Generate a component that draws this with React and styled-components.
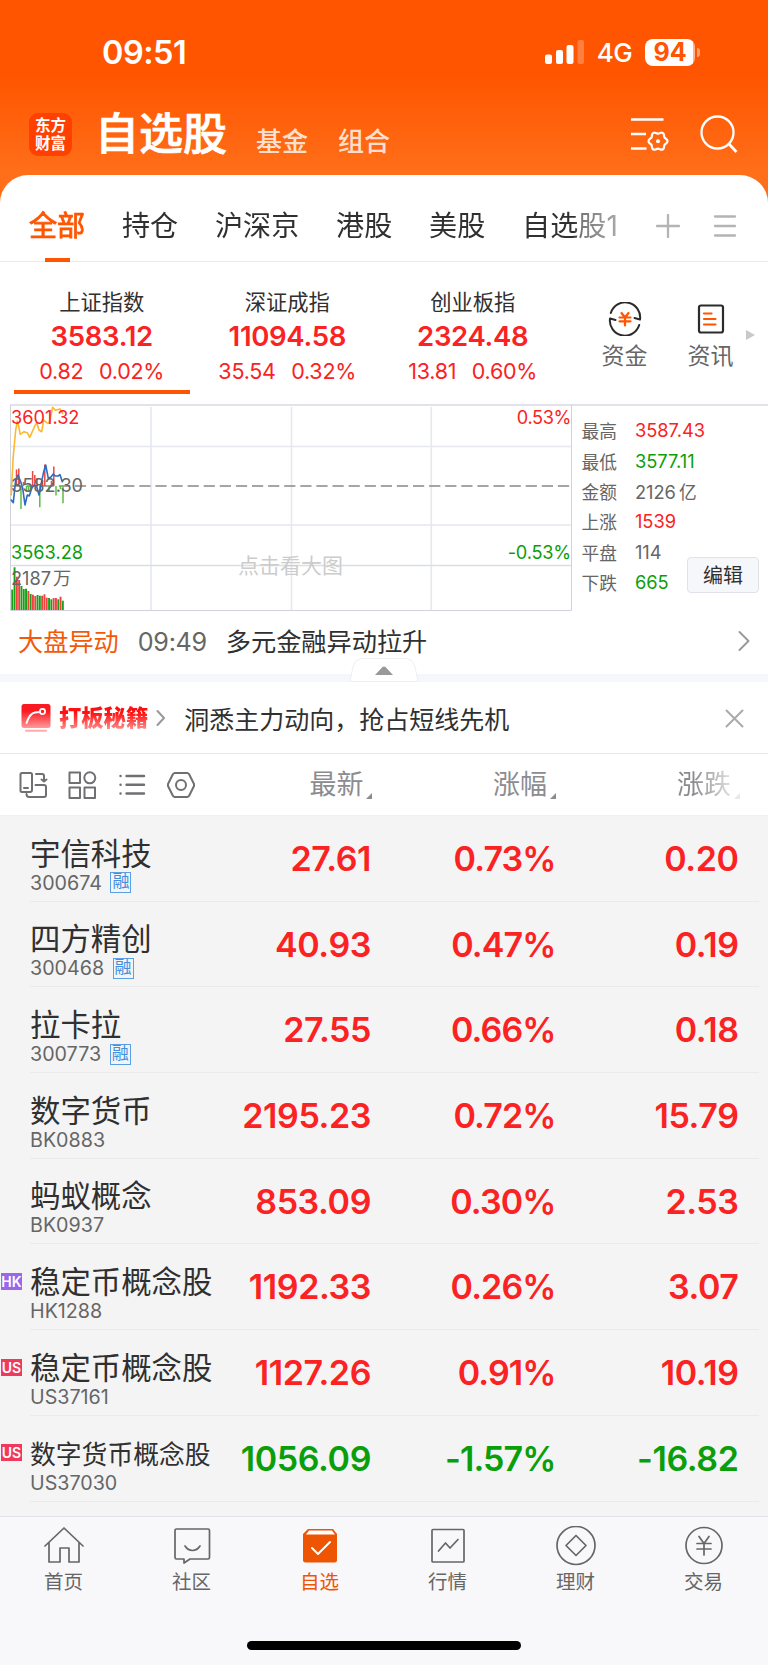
import React from "react";
import styled, { createGlobalStyle } from "styled-components";

const RED = "#fa2222";
const GREEN = "#0a9f0a";
const ORANGE = "#ff5500";

const tabs = ["全部", "持仓", "沪深京", "港股", "美股", "自选股1"];

const indices = [
  { name: "上证指数", value: "3583.12", diff: "0.82", pct: "0.02%" },
  { name: "深证成指", value: "11094.58", diff: "35.54", pct: "0.32%" },
  { name: "创业板指", value: "2324.48", diff: "13.81", pct: "0.60%" },
];

const stats = [
  { label: "最高", value: "3587.43", color: RED },
  { label: "最低", value: "3577.11", color: GREEN },
  { label: "金额", value: "2126", unit: "亿", color: "#666" },
  { label: "上涨", value: "1539", color: RED },
  { label: "平盘", value: "114", color: "#666" },
  { label: "下跌", value: "665", color: GREEN },
];

const stocks = [
  { name: "宇信科技", code: "300674", margin: true, price: "27.61", pct: "0.73%", diff: "0.20" },
  { name: "四方精创", code: "300468", margin: true, price: "40.93", pct: "0.47%", diff: "0.19" },
  { name: "拉卡拉", code: "300773", margin: true, price: "27.55", pct: "0.66%", diff: "0.18" },
  { name: "数字货币", code: "BK0883", price: "2195.23", pct: "0.72%", diff: "15.79" },
  { name: "蚂蚁概念", code: "BK0937", price: "853.09", pct: "0.30%", diff: "2.53" },
  { name: "稳定币概念股", code: "HK1288", market: "HK", price: "1192.33", pct: "0.26%", diff: "3.07" },
  { name: "稳定币概念股", code: "US37161", market: "US", price: "1127.26", pct: "0.91%", diff: "10.19" },
  { name: "数字货币概念股", code: "US37030", market: "US", price: "1056.09", pct: "-1.57%", diff: "-16.82", down: true },
];

// [color, top] of every volume bar, left to right
const volumes = [
  ["g", 189.5], ["g", 167.3], ["r", 176.7], ["r", 180], ["g", 186], ["g", 189], ["g", 188.7], ["r", 191],
  ["g", 194], ["r", 194.7], ["r", 196], ["g", 195], ["g", 195.7], ["r", 195.7], ["r", 194.3], ["r", 197.7],
  ["g", 198], ["g", 199.3], ["r", 198], ["r", 198], ["g", 199.3], ["r", 196.7], ["g", 200.7],
];

// [x, y] end of the bars growing from the middle line
const upBars = [[16.5, 69.5], [18.8, 68.5], [23.5, 82], [32.6, 71], [34.8, 75], [37, 78], [42.5, 80], [44.8, 64.5], [51.5, 81], [53.8, 66.5]];
const downBars = [[21, 109], [26.5, 91], [28.5, 92], [30.5, 90], [39.8, 107.3], [49, 92], [56, 95.5], [60.5, 89], [63, 103.3]];

const GlobalStyle = createGlobalStyle`
  * { box-sizing: border-box; }
  body {
    margin: 0;
    background: #fff;
    font-family: Inter, "Noto Sans CJK SC", sans-serif;
    color: #303030;
  }
  svg { display: block; flex: none; }
`;

const Page = styled.div`
  width: 768px;
  height: 1665px;
  display: flex;
  flex-direction: column;
  overflow: hidden;
`;

/* ——— Header ——— */
const Header = styled.header`
  height: 215px;
  flex: none;
  margin-bottom: -40px;
  background: linear-gradient(#ff5500 0, #ff5500 75px, #ff6f1a 175px, #ff6f1a 100%);
  color: #fff;
`;

const StatusBar = styled.div`
  height: 104px;
  padding: 0 68px 0 102px;
  display: flex;
  align-items: center;
`;

const Clock = styled.div`
  flex: 1;
  padding-top: 1px;
  font-size: 32.5px;
  font-weight: 600;
  letter-spacing: -0.5px;
`;

const Network = styled.div`
  margin: 1px 13px 0 12px;
  font-size: 26px;
  font-weight: 500;
  letter-spacing: -0.6px;
`;

const Battery = styled.div`
  width: 50px;
  height: 27px;
  margin-right: 2px;
  border-radius: 8px;
  background: linear-gradient(90deg, #fff 47.5px, #ffb48c 47.5px);
  color: ${ORANGE};
  font-size: 25px;
  font-weight: 700;
  line-height: 27px;
  text-align: center;
`;

const BatteryTip = styled.div`
  width: 3px;
  height: 9px;
  border-radius: 0 4px 4px 0;
  background: #ffa070;
`;

const TitleBar = styled.div`
  height: 71px;
  padding: 0 29px;
  display: flex;
`;

const Logo = styled.div`
  width: 43px;
  height: 43px;
  margin: 9px 23px 0 0;
  padding-top: 4px;
  border-radius: 9px;
  background: #ff4000;
  font-size: 15.5px;
  font-weight: 700;
  line-height: 18px;
  text-align: center;
`;

const Title = styled.h1`
  margin: 0 29px 0 0;
  font-size: 44px;
  font-weight: 500;
  line-height: 61px;
  -webkit-text-stroke: 0.7px #fff;
`;

const SubTitle = styled.div`
  width: 53px;
  margin-right: 29px;
  padding-top: 18px;
  color: #ffe0d0;
  font-size: 26px;
  font-weight: 500;
  line-height: 40px;
  white-space: nowrap;
`;

const HeaderIcons = styled.div`
  margin: 10px 0 0 auto;
  display: flex;
  gap: 30px;
`;

/* ——— Tabs ——— */
const TabBar = styled.nav`
  height: 87px;
  flex: none;
  display: flex;
  align-items: center;
  border-radius: 28px 28px 0 0;
  border-bottom: 1px solid #ececee;
  background: #fff;
`;

const TabScroller = styled.div`
  width: 640px;
  height: 87px;
  padding-left: 29px;
  display: flex;
  gap: 36.8px;
  mask-image: linear-gradient(90deg, #000 574px, rgba(0, 0, 0, 0.65) 582px, rgba(0, 0, 0, 0.4) 620px);
`;

const Tab = styled.div`
  position: relative;
  flex: none;
  color: ${({ $active }) => ($active ? ORANGE : "#303030")};
  font-size: 28.1px;
  line-height: 103px;
  -webkit-text-stroke: ${({ $active }) => ($active ? "0.8px" : "0")};

  &::after {
    content: "";
    display: ${({ $active }) => ($active ? "block" : "none")};
    position: absolute;
    left: 16px;
    bottom: 0;
    width: 25px;
    height: 4px;
    background: ${ORANGE};
  }
`;

const TabActions = styled.div`
  padding: 15px 0 0 15.5px;
  display: flex;
  gap: 33.5px;
`;

/* ——— Index strip ——— */
const IndexStrip = styled.section`
  height: 142px;
  flex: none;
  padding-left: 9px;
  display: flex;
`;

const IndexCard = styled.div`
  width: 185.5px;
  height: 133px;
  padding-top: 24px;
  display: flex;
  flex-direction: column;
  align-items: center;

  &::after {
    content: "";
    width: 176px;
    height: 4px;
    margin-top: 3px;
    background: ${({ $active }) => ($active ? ORANGE : "transparent")};
  }
`;

const IndexName = styled.div`
  font-size: 21.3px;
  line-height: 32px;
`;

const IndexValue = styled.div`
  color: ${RED};
  font-size: 27.5px;
  font-weight: 600;
  line-height: 37px;
  letter-spacing: -0.3px;
`;

const IndexChange = styled.div`
  height: 32px;
  display: flex;
  gap: 15.5px;
  color: ${RED};
  font-size: 21.5px;
  line-height: 32px;
  letter-spacing: -0.25px;
`;

const Shortcut = styled.div`
  width: 86px;
  padding-top: 40px;
  display: flex;
  flex-direction: column;
  align-items: center;
  color: #666;
  font-size: 23px;
  line-height: 41px;

  &:nth-child(4) {
    margin-left: 16px;
  }
`;

const MoreArrow = styled.div`
  width: 0;
  height: 0;
  margin: 68px 0 0 -8px;
  border: solid transparent;
  border-width: 5.5px 0 5.5px 9px;
  border-left-color: #c9c9c9;
`;

/* ——— Chart ——— */
const ChartPanel = styled.section`
  height: 207px;
  flex: none;
  padding-left: 10px;
  display: flex;
`;

const StatList = styled.div`
  flex: 1;
  padding: 9px 9px 0 9.5px;
  border-top: 2px solid #e2e2ea;
  position: relative;
`;

const Stat = styled.div`
  height: 30.4px;
  display: flex;
  align-items: center;
  color: #666;
  font-size: 17.7px;
`;

const StatValue = styled.span`
  margin-left: 18px;
  color: ${({ $color }) => $color};
  font-size: 18.3px;
`;

const StatUnit = styled.span`
  margin-left: 3px;
  font-size: 17.7px;
`;

const EditButton = styled.button`
  position: absolute;
  right: 9px;
  top: 151px;
  width: 72px;
  height: 36px;
  padding: 0;
  border: 1px solid #dfe2ea;
  border-radius: 4px;
  background: #f6f7fb;
  color: #303030;
  font: 400 20px/36px Inter, "Noto Sans CJK SC", sans-serif;
`;

/* ——— News ——— */
const NewsRow = styled.section`
  position: relative;
  height: 71px;
  flex: none;
  padding: 0 18px 5px;
  display: flex;
  align-items: center;
  border-bottom: 8px solid #f6f7fa;
  font-size: 25.2px;
`;

const NewsTag = styled.span`
  color: #f25a0a;
`;

const NewsTime = styled.span`
  width: 68px;
  margin: 0 20px 0 19px;
  padding-top: 3px;
  color: #666;
  letter-spacing: -0.3px;
`;

const Handle = styled.div`
  position: absolute;
  left: 349px;
  top: 47px;
`;

const PushRight = styled.div`
  margin-left: auto;
`;

/* ——— Promo ——— */
const PromoRow = styled.section`
  height: 72px;
  flex: none;
  padding: 1px 24px 0 21px;
  display: flex;
  align-items: center;
  border-bottom: 1px solid #e8e8ea;
  font-size: 25px;
`;

const PromoTitle = styled.span`
  margin: 0 8px 0 8px;
  background: linear-gradient(#ff1010 35%, #ff9090 85%);
  background-clip: text;
  color: transparent;
  font-size: 22.3px;
  font-weight: 900;
  line-height: 34px;
`;

const PromoText = styled.span`
  margin: -1px 0 0 18px;
`;

/* ——— Stock table ——— */
const TableHead = styled.div`
  height: 62px;
  flex: none;
  padding-left: 18.5px;
  display: flex;
  align-items: center;
  border-bottom: 1px solid #f0f0f2;
`;

const ToolIcons = styled.div`
  width: 178px;
  padding-top: 1px;
  display: flex;
  gap: 20.5px;
`;

const Column = styled.div`
  width: ${({ $width }) => $width}px;
  padding-top: 1px;
  display: flex;
  justify-content: flex-end;
  color: #8c8c90;
  font-size: 27px;
  line-height: 62px;
  ${({ $faded }) => $faded && "mask-image: linear-gradient(90deg, #000 75%, rgba(0, 0, 0, 0.2) 97%);"}

  &::after {
    content: "";
    align-self: flex-end;
    margin: 0 0 17.5px 2.5px;
    border: 3.5px solid transparent;
    border-right-color: #8c8c90;
    border-bottom-color: #8c8c90;
  }
`;

const Table = styled.div`
  flex: 1;
  background: #f4f4f5;
`;

const Row = styled.div`
  position: relative;
  height: 85.7px;
  margin: 0 9px 0 30px;
  padding-right: 20px;
  display: flex;
  border-bottom: 1px solid #eaeaeb;
`;

const NameCell = styled.div`
  width: 190px;
  padding-top: 17.7px;
`;

const StockName = styled.div`
  font-size: ${({ $small }) => ($small ? 25.8 : 30.4)}px;
  line-height: ${({ $small }) => ($small ? 41 : 40)}px;
  height: 40px;
  white-space: nowrap;
`;

const StockCode = styled.div`
  height: 18px;
  display: flex;
  align-items: center;
  gap: 8.5px;
  color: #666;
  font-size: 19.7px;
`;

const MarginBadge = styled.span`
  width: 21px;
  height: 21px;
  border: 1.5px solid #5b9fe8;
  color: #3f8fe0;
  font-size: 17px;
  line-height: 17px;
  text-align: center;
`;

const MarketBadge = styled.span`
  position: absolute;
  left: -29px;
  top: 28.5px;
  width: 21px;
  height: 17px;
  background: ${({ $market }) => ($market === "HK" ? "#9d66ea" : "#f03a5c")};
  color: #fff;
  font-size: 14px;
  font-weight: 600;
  line-height: 17px;
  text-align: center;
`;

const Num = styled.div`
  width: ${({ $width }) => $width}px;
  color: ${({ $down }) => ($down ? GREEN : RED)};
  font-size: 34px;
  font-weight: 600;
  line-height: 86px;
  letter-spacing: ${({ $tight }) => ($tight ? -0.9 : -0.4)}px;
  text-align: right;
`;

/* ——— Bottom bar ——— */
const BottomBar = styled.footer`
  height: 149px;
  flex: none;
  border-top: 1px solid #e2e3ea;
  background: #f8f8fb;
`;

const BottomTabs = styled.div`
  height: 124px;
  display: grid;
  grid-template-columns: repeat(6, 1fr);
`;

const BottomTab = styled.div`
  padding-top: 9px;
  display: flex;
  flex-direction: column;
  align-items: center;
  color: ${({ $active }) => ($active ? "#ee5502" : "#666")};
  font-size: 19.5px;
  line-height: 33px;

  span {
    margin-left: -1px;
  }
`;

const HomeIndicator = styled.div`
  width: 274px;
  height: 9px;
  margin: 0 auto;
  border-radius: 5px;
  background: #000;
`;

const stroke = (width, color = "currentColor") => ({
  fill: "none",
  stroke: color,
  strokeWidth: width,
  strokeLinecap: "round",
  strokeLinejoin: "round",
});

// six-lobed cog around (cx, cy)
const cogPoints = (cx, cy, r, depth) =>
  Array.from({ length: 72 }, (_, i) => {
    const a = (i * Math.PI) / 36;
    const d = r + depth * Math.cos(6 * a);
    return `${(cx + d * Math.cos(a)).toFixed(2)},${(cy + d * Math.sin(a)).toFixed(2)}`;
  }).join(" ");

const bottomTabs = [
  {
    label: "首页",
    icon: <path d="M1 20 20 2l19 18M5 17v19h11V22h9v14h10V17" />,
  },
  {
    label: "社区",
    icon: <path d="M4.500 3H36a1.500 1.500 0 0 1 1.500 1.500v27A1.500 1.500 0 0 1 36 33H18l-6 4v-4H4.500A1.500 1.500 0 0 1 3 31.500v-27A1.500 1.500 0 0 1 4.500 3zM13 20c4 6 11 6 15 0" />,
  },
  {
    label: "自选",
    active: true,
    icon: (
      <>
        <path d="M8 3h25l4 5v26a2.500 2.500 0 0 1-2.500 2.500h-29A2.500 2.500 0 0 1 3 34V8z" fill="currentColor" stroke="none" />
        <path d="M9 4.500h23l3 4H6z" fill="#fff" stroke="none" />
        <path d="m12 22 6 6 12-12" stroke="#fff" strokeWidth="2" />
      </>
    ),
  },
  {
    label: "行情",
    icon: <path d="M5 3.500h30a1 1 0 0 1 1 1V35a1 1 0 0 1-1 1H5a1 1 0 0 1-1-1V4.500a1 1 0 0 1 1-1zM10.500 25l7-8 4.500 5 8-8.500" />,
  },
  {
    label: "理财",
    icon: (
      <>
        <circle cx="20" cy="19.500" r="19" />
        <path d="m20 9.500 10 10-10 10-10-10z" />
      </>
    ),
  },
  {
    label: "交易",
    icon: (
      <>
        <circle cx="20" cy="19.500" r="18" />
        <path d="m15 10.500 5 7 5-7M20 17.500V29M13 17.500h14M13 23h14" />
      </>
    ),
  },
];

const MinuteChart = () => (
  <svg width="562" height="207" viewBox="10 4 562 207" fontFamily='Inter, "Noto Sans CJK SC", sans-serif'>
    <g stroke="#e6e8f0" fill="none">
      <path d="M151 7v204M291.500 7v204M431.300 7v204" strokeWidth="1.600" />
      <path d="M10 46.500h562M10 125h562" strokeWidth="1.300" />
      <path d="M10 165.500h562" strokeWidth="1.300" stroke="#dcdee6" />
      <path d="M10 5h562" strokeWidth="2" stroke="#e2e2ea" />
      <path d="M10.500 5v205.500h561V5" strokeWidth="1" stroke="#d0d3dc" />
    </g>
    <text x="238" y="173" fontSize="21" fill="#ccc">点击看大图</text>
    <path d="M10.500 86h560" stroke="#888" strokeWidth="1.600" strokeDasharray="11.200 4.900" />
    {upBars.map(([x, y]) => (
      <path key={x} d={`M${x} 86V${y}`} stroke="#ee4545" strokeWidth="1.500" />
    ))}
    {downBars.map(([x, y]) => (
      <path key={x} d={`M${x} 86V${y}`} stroke="#5dbb45" strokeWidth="1.500" />
    ))}
    {volumes.map(([c, top], i) => (
      <rect key={i} x={11.3 + i * 2.3} y={top} width="1.900" height={210 - top} fill={c === "r" ? "#f04040" : "#18a018"} />
    ))}
    <path
      d="M11.200 95 13.200 57l2.500-27 1.700-9 1.600 7 1.300 6.300 3.700-2.600 3.300 1 2.400 4.700 2.600-5.700 2.400-5.600 2-3.400 2.300 7.300 2.700 1.700 2-11.700 3 2.700 2.300.6L52.700 7.300l2.600 3 4.700-1.300 2.700 4.500"
      {...stroke(1.6, "#fcb830")}
    />
    <path
      d="M11.200 100l2.100 2.700L15.700 80l2.300-5 2.700 6.700 2 6.600L25 105l2.300-10 2 1 2.400-7.700 2.600-3.300 2.400 1.700L39 95l2.300-11.700 2.400-11.600 2-6.700 2.600 13.300 2.400-1 2.600-3.300 2 2h2.700l2-1.300 2.300 7"
      {...stroke(1.6, "#2a6cc4")}
    />
    <g fontSize="18.200">
      <text x="11" y="23.500" fill={RED}>3601.32</text>
      <text x="11" y="91.500" fill="#666">3582.30</text>
      <text x="11" y="159" fill={GREEN}>3563.28</text>
      <text x="11" y="185" fill="#666">2187<tspan dx="2">万</tspan></text>
      <text x="571" y="23.500" fill={RED} textAnchor="end" letterSpacing="-0.400">0.53%</text>
      <text x="571" y="159" fill={GREEN} textAnchor="end" letterSpacing="-0.200">-0.53%</text>
    </g>
  </svg>
);

const App = () => (
  <Page>
    <GlobalStyle />
    <Header>
      <StatusBar>
        <Clock>09:51</Clock>
        <svg width="40" height="26" viewBox="0 0 40 26" fill="#fff">
          <rect x="0" y="15.500" width="7" height="9.500" rx="2" />
          <rect x="11" y="11" width="7" height="14" rx="2" />
          <rect x="21.500" y="6" width="7" height="19" rx="2" />
          <rect x="32.500" y="1" width="6.500" height="24" rx="2" opacity="0.250" />
        </svg>
        <Network>4G</Network>
        <Battery>94</Battery>
        <BatteryTip />
      </StatusBar>
      <TitleBar>
        <Logo>东方<br />财富</Logo>
        <Title>自选股</Title>
        <SubTitle>基金</SubTitle>
        <SubTitle>组合</SubTitle>
        <HeaderIcons>
          <svg width="38" height="40" viewBox="0 0 38 40">
            <path d="M0 5.500h32.500M0 20h15M0 34.500h15.500" stroke="#fff" strokeWidth="2.400" />
            <polygon points={cogPoints(27, 27.2, 8.5, 1)} {...stroke(2.2, "#fff")} />
            <circle cx="27" cy="27.200" r="2" fill="#fff" />
          </svg>
          <svg width="40" height="40" viewBox="0 0 40 40">
            <circle cx="18.500" cy="18.500" r="16" {...stroke(2.3, "#fff")} />
            <path d="m30 30 7.500 8" stroke="#fff" strokeWidth="2.800" />
          </svg>
        </HeaderIcons>
      </TitleBar>
    </Header>

    <TabBar>
      <TabScroller>
        {tabs.map((tab, i) => (
          <Tab key={tab} $active={i === 0}>{tab}</Tab>
        ))}
      </TabScroller>
      <TabActions>
        <svg width="24" height="24" viewBox="0 0 24 24">
          <path d="M1 12h22M12 1v22" {...stroke(2.3, "#b4b4b4")} />
        </svg>
        <svg width="24" height="24" viewBox="0 0 24 24">
          <path d="M2 2.500h20M2 12h20M2 21.500h20" {...stroke(2.3, "#b4b4b4")} />
        </svg>
      </TabActions>
    </TabBar>

    <IndexStrip>
      {indices.map((item, i) => (
        <IndexCard key={item.name} $active={i === 0}>
          <IndexName>{item.name}</IndexName>
          <IndexValue>{item.value}</IndexValue>
          <IndexChange>
            <span>{item.diff}</span>
            <span>{item.pct}</span>
          </IndexChange>
        </IndexCard>
      ))}
      <Shortcut>
        <svg width="34" height="34" viewBox="0 0 34 34">
          <path d="M2.800 11A15 15 0 0 1 32 17.500L26.500 16M31.200 23A15 15 0 0 1 2 16.500L7.500 18" {...stroke(2, "#2b2b2b")} />
          <path d="m13.500 11 3.500 4.500 3.500-4.500M17 15v8.500M11.500 15.500h11M11.500 19.300h11" {...stroke(2.2, ORANGE)} />
        </svg>
        资金
      </Shortcut>
      <Shortcut>
        <svg width="34" height="34" viewBox="0 0 34 34">
          <rect x="5" y="3.500" width="24" height="27" rx="2" {...stroke(2.2, "#2b2b2b")} />
          <path d="M10 11.500h7.500M10 17h11.500M10 22.500h11.500" {...stroke(2.2, ORANGE)} />
        </svg>
        资讯
      </Shortcut>
      <MoreArrow />
    </IndexStrip>

    <ChartPanel>
      <MinuteChart />
      <StatList>
        {stats.map((s) => (
          <Stat key={s.label}>
            {s.label}
            <StatValue $color={s.color}>
              {s.value}
              {s.unit && <StatUnit>{s.unit}</StatUnit>}
            </StatValue>
          </Stat>
        ))}
        <EditButton>编辑</EditButton>
      </StatList>
    </ChartPanel>

    <NewsRow>
      <NewsTag>大盘异动</NewsTag>
      <NewsTime>09:49</NewsTime>
      <span>多元金融异动拉升</span>
      <PushRight>
        <svg width="12" height="24" viewBox="0 0 12 24">
          <path d="m1.500 4 9 9-9 9" {...stroke(1.9, "#999")} />
        </svg>
      </PushRight>
      <Handle>
        <svg width="70" height="24" viewBox="0 0 70 24">
          <path d="M1 23.500 4 9Q6 .5 14 .5h42q8 0 10 8.500l3 14.500z" fill="#fff" stroke="#eeeff2" />
          <path d="M26 17h18l-7.500-8q-1.500-1.200-3 0z" fill="#999" />
        </svg>
      </Handle>
    </NewsRow>

    <PromoRow>
      <svg width="30" height="28" viewBox="0 0 30 28">
        <defs>
          <linearGradient id="promo" x1="0" y1="0" x2="0" y2="1">
            <stop offset="0.300" stopColor="#fb1a22" />
            <stop offset="1" stopColor="#ff9a9a" />
          </linearGradient>
        </defs>
        <rect width="29" height="24" x="0.500" rx="2.500" fill="url(#promo)" />
        <path d="M5.500 19Q9 9 14 8.500l5-.5" {...stroke(2, "#fff")} />
        <circle cx="21.500" cy="7.500" r="2.600" {...stroke(1.7, "#fff")} />
        <path d="M5 26.700h20" {...stroke(2, "#ffaaaa")} />
      </svg>
      <PromoTitle>打板秘籍</PromoTitle>
      <svg width="10" height="18" viewBox="0 0 10 18">
        <path d="m1.500 2 6.500 7-6.500 7" {...stroke(2, "#999")} />
      </svg>
      <PromoText>洞悉主力动向，抢占短线先机</PromoText>
      <PushRight>
        <svg width="19" height="19" viewBox="0 0 19 19">
          <path d="m1.500 1.500 16 16M17.500 1.500l-16 16" {...stroke(2, "#aaa")} />
        </svg>
      </PushRight>
    </PromoRow>

    <TableHead>
      <ToolIcons>
        <svg width="29" height="28" viewBox="0 0 29 28" {...stroke(2, "#707073")}>
          <path d="M9 21H3a1.500 1.500 0 0 1-1.500-1.500V3.500A1.500 1.500 0 0 1 3 2h8.500A1.500 1.500 0 0 1 13 3.500V19a2 2 0 0 1-2 2zM5 17h4" />
          <path d="M17 3h6a2 2 0 0 1 2 2v5M22.500 8.500l2.500 2 2.500-2M16.500 14H25a2 2 0 0 1 2 2v8a2 2 0 0 1-2 2H10q-2.500 0-2.500-3" />
        </svg>
        <svg width="29" height="28" viewBox="0 0 29 28" {...stroke(2, "#707073")}>
          <path d="M1.500 1.500h10.500v10.500H1.500zM1.500 16.500h10.500V27H1.500zM16.500 16.500H27V27H16.500z" />
          <circle cx="21.800" cy="6.800" r="5.500" />
        </svg>
        <svg width="29" height="28" viewBox="0 0 29 28" {...stroke(2.4, "#707073")}>
          <path d="M8.500 5H26M8.500 13.700H26M8.500 22.500H26M2.500 5h.1M2.500 13.700h.1M2.500 22.500h.1" />
        </svg>
        <svg width="29" height="28" viewBox="0 0 29 28" {...stroke(2, "#707073")}>
          <path d="M7.500 2h13l1.500 1 5 10v2l-5 10-1.500 1h-13L6 25 1 15v-2L6 3z" />
          <circle cx="14" cy="14" r="5" />
        </svg>
      </ToolIcons>
      <Column $width={175.5}>最新</Column>
      <Column $width={183.5}>涨幅</Column>
      <Column $width={184} $faded>涨跌</Column>
    </TableHead>

    <Table>
      {stocks.map((s) => (
        <Row key={s.code}>
          {s.market && <MarketBadge $market={s.market}>{s.market}</MarketBadge>}
          <NameCell>
            <StockName $small={s.name.length > 6}>{s.name}</StockName>
            <StockCode>
              {s.code}
              {s.margin && <MarginBadge>融</MarginBadge>}
            </StockCode>
          </NameCell>
          <Num $width={151} $down={s.down}>{s.price}</Num>
          <Num $width={184.5} $down={s.down} $tight>{s.pct}</Num>
          <Num $width={183} $down={s.down}>{s.diff}</Num>
        </Row>
      ))}
    </Table>

    <BottomBar>
      <BottomTabs>
        {bottomTabs.map((tab) => (
          <BottomTab key={tab.label} $active={tab.active}>
            <svg width="40" height="40" viewBox="0 0 40 40" {...stroke(1.7)}>{tab.icon}</svg>
            <span>{tab.label}</span>
          </BottomTab>
        ))}
      </BottomTabs>
      <HomeIndicator />
    </BottomBar>
  </Page>
);

export default App;
